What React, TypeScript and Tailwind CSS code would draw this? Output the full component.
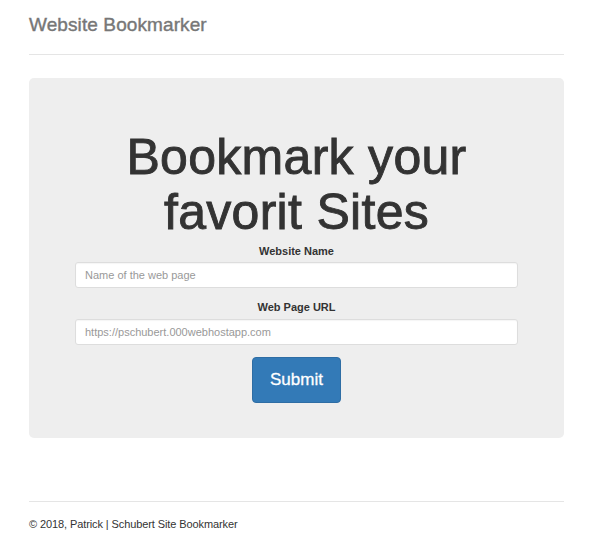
export default function App() {
  return (
    <div className="w-[600px] h-[545px] bg-white text-[#333]" style={{ fontFamily: '"Liberation Sans", Arial, sans-serif' }}>
      <div className="px-[29px] w-[593px]">
        <div className="pt-[13px] pb-[17px] border-b border-[#e5e5e5]">
          <h3 className="text-[19px] leading-[24px] text-[#777] font-normal m-0 tracking-[0.1px] [-webkit-text-stroke:0.4px_#777]">Website Bookmarker</h3>
        </div>
        <div className="mt-[23px] bg-[#eeeeee] rounded-[5px] pt-[52px] pb-[35px] flex flex-col items-center">
          <h1 className="text-[50px] leading-[55px] font-normal text-center text-[#333] tracking-[0.3px] [-webkit-text-stroke:0.9px_#333]">
            Bookmark your<br />favorit Sites
          </h1>
          <form className="w-[443px] flex flex-col items-center mt-[4px]">
            <label className="text-[11px] leading-[15px] font-bold text-[#333]">Website Name</label>
            <input
              type="text"
              placeholder="Name of the web page"
              className="mt-[3px] w-full h-[26px] bg-white border border-[#ddd] rounded-[3px] px-[9px] text-[11px] placeholder:text-[#999] outline-none shadow-[inset_0_1px_1px_rgba(0,0,0,0.04)]"
            />
            <label className="mt-[12px] text-[11px] leading-[15px] font-bold text-[#333]">Web Page URL</label>
            <input
              type="text"
              placeholder="https://pschubert.000webhostapp.com"
              className="mt-[4px] w-full h-[26px] bg-white border border-[#ddd] rounded-[3px] px-[9px] text-[11px] placeholder:text-[#999] outline-none shadow-[inset_0_1px_1px_rgba(0,0,0,0.04)]"
            />
            <button
              type="button"
              className="mt-[12px] w-[89px] h-[46px] bg-[#337ab7] border border-[#2e6da4] rounded-[4px] text-white text-[17px] [-webkit-text-stroke:0.3px_#fff]"
            >
              Submit
            </button>
          </form>
        </div>
        <div className="mt-[63px] border-t border-[#e5e5e5] pt-[15px]">
          <p className="text-[11px] leading-[15px] text-[#333] tracking-[-0.1px]">© 2018, Patrick | Schubert Site Bookmarker</p>
        </div>
      </div>
    </div>
  );
}
